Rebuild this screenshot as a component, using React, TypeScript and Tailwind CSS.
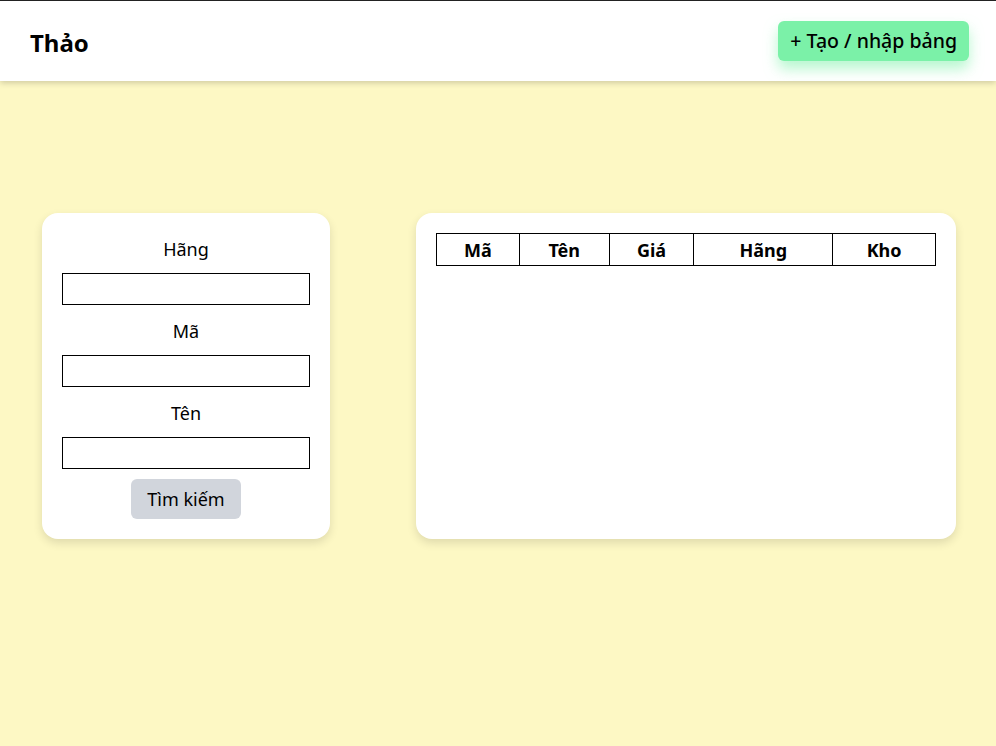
import { useState } from "react";

const columns = [
  { key: "ma", label: "Mã", w: "w-[83px]" },
  { key: "ten", label: "Tên", w: "w-[90px]" },
  { key: "gia", label: "Giá", w: "w-[85px]" },
  { key: "hang", label: "Hãng", w: "w-[139px]" },
  { key: "kho", label: "Kho", w: "w-[103px]" },
];

export default function App() {
  const [hang, setHang] = useState("");
  const [ma, setMa] = useState("");
  const [ten, setTen] = useState("");

  const fields = [
    { label: "Hãng", value: hang, set: setHang },
    { label: "Mã", value: ma, set: setMa },
    { label: "Tên", value: ten, set: setTen },
  ];

  return (
    <div
      className="min-h-[746px] bg-[#fdf8c4] text-black"
      style={{ fontFamily: '"Noto Sans", "Open Sans", sans-serif' }}
    >
      <header className="relative z-10 flex h-[81px] items-center justify-between border-t border-[#222] bg-white pl-[30px] pr-[27px] shadow-[0_2px_6px_rgba(0,0,0,0.18)]">
        <h1 className="mt-1 text-[24px] font-bold">Thảo</h1>
        <button className="h-10 rounded-md bg-[#7bf1a8] px-3 text-[19.5px] font-medium shadow-[0_8px_14px_rgba(123,241,168,0.55)]">
          + Tạo / nhập bảng
        </button>
      </header>

      <main className="flex items-stretch gap-[86px] pl-[42px] pr-[40px] pt-[132px]">
        <div className="flex w-[288px] flex-col items-center rounded-2xl bg-white px-5 pt-[22px] pb-5 shadow-[0_4px_10px_rgba(0,0,0,0.12)]">
          {fields.map((f) => (
            <div key={f.label} className="flex w-full flex-col items-center">
              <label className="mb-2.5 text-[18px] leading-7">{f.label}</label>
              <input
                value={f.value}
                onChange={(e) => f.set(e.target.value)}
                className="mb-3 h-8 w-full border border-black px-1 outline-none"
              />
            </div>
          ))}
          <button className="-mt-0.5 h-10 w-[110px] rounded-md bg-[#d1d5dc] text-[18px]">
            Tìm kiếm
          </button>
        </div>

        <div className="flex-1 rounded-2xl bg-white p-5 shadow-[0_4px_10px_rgba(0,0,0,0.12)]">
          <table className="w-full border-collapse">
            <thead>
              <tr>
                {columns.map((c) => (
                  <th
                    key={c.key}
                    className={`${c.w} h-8 border border-black p-0 text-[18px] leading-6 font-bold`}
                  >
                    {c.label}
                  </th>
                ))}
              </tr>
            </thead>
            <tbody></tbody>
          </table>
        </div>
      </main>
    </div>
  );
}
